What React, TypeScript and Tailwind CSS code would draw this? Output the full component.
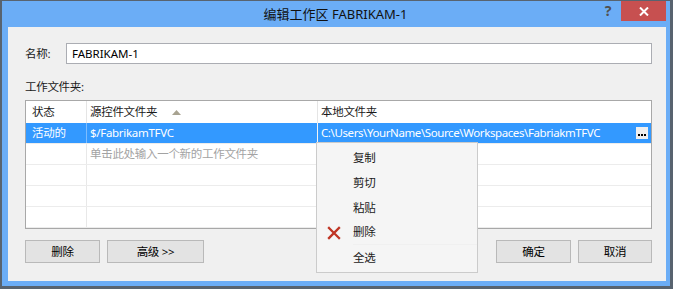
import React from "react";

const rows = [
  {
    status: "活动的",
    src: "$/FabrikamTFVC",
    local: "C:\\Users\\YourName\\Source\\Workspaces\\FabriakmTFVC",
    selected: true,
  },
  { status: "", src: "单击此处输入一个新的工作文件夹", local: "", hint: true },
  { status: "", src: "", local: "" },
  { status: "", src: "", local: "" },
  { status: "", src: "", local: "" },
];

const menuItems = ["复制", "剪切", "粘贴", "删除", "全选"];

function RedX() {
  return (
    <svg width="14" height="14" viewBox="0 0 14 14">
      <path d="M2 2 L12 12 M12 2 L2 12" stroke="#bf3524" strokeWidth="2.3" strokeLinecap="square" />
    </svg>
  );
}

function Button({ label, w }: { label: string; w: string }) {
  return (
    <div
      className={`${w} h-[23px] flex items-center justify-center bg-[#e3e3e3] border border-[#b9b9b9] text-[11.5px] text-black`}
    >
      {label}
    </div>
  );
}

export default function App() {
  return (
    <div className='w-[673px] h-[289px] flex flex-col bg-[#6badf6] border-l-2 border-t border-r-[3px] border-b-[3px] border-[#58636f] font-[family-name:"Noto_Sans","Noto_Sans_CJK_SC",sans-serif] leading-none'>
      {/* title bar */}
      <div className="h-[26px] grid grid-cols-[1fr_auto_1fr] pr-[4px]">
        <div />
        <div className="flex items-center text-[13px] text-[#111] pl-[3px]">编辑工作区 FABRIKAM-1</div>
        <div className="flex justify-end items-start">
          <div className="w-[26px] h-[20px] flex items-center justify-center text-[14px] font-bold text-[#505050]">?</div>
          <div className="w-[45px] h-[20px] bg-[#c75050] flex items-center justify-center">
            <svg width="10" height="9" viewBox="0 0 10 9">
              <path d="M1 0.5 L9 8.5 M9 0.5 L1 8.5" stroke="#fff" strokeWidth="2" />
            </svg>
          </div>
        </div>
      </div>

      {/* content */}
      <div className="flex-1 ml-[6px] mr-[4px] mb-[5px] bg-[#f0f0f0] pl-[17px] pr-[14px] pt-[16px] flex flex-col text-[11.5px] tracking-[-0.3px] text-[#1a1a1a]">
        <div className="flex items-center h-[21px]">
          <div className="w-[41px]">名称:</div>
          <div className="flex-1 h-[21px] bg-white border border-[#abadb3] flex items-center pl-[5px] text-black tracking-normal">
            FABRIKAM-1
          </div>
        </div>

        <div className="mt-[15px] h-[16px] flex items-center">工作文件夹:</div>

        <div className="relative mt-[5px] h-[129px] border border-[#a8a8a8] bg-white flex flex-col">
          <div className="h-[22px] flex shrink-0">
            <div className="w-[60px] pl-[6px] flex items-center">状态</div>
            <div className="w-[231px] pl-[3px] flex items-center border-l border-[#e5e5e5]">
              源控件文件夹
              <svg className="ml-[15px]" width="9" height="5" viewBox="0 0 9 5">
                <path d="M0 5 L4.5 0 L9 5 Z" fill="#a8a391" />
              </svg>
            </div>
            <div className="flex-1 pl-[3px] flex items-center border-l border-[#e5e5e5]">本地文件夹</div>
          </div>
          {rows.map((r, i) => (
            <div key={i} className="h-[21px] flex shrink-0 border-b border-[#ececec]">
              <div className={`w-[60px] pl-[6px] flex items-center ${r.selected ? "bg-[#3399ff] text-white" : ""}`}>
                {r.status}
              </div>
              <div
                className={`w-[231px] pl-[3px] flex items-center border-l ${
                  r.selected ? "bg-[#3399ff] text-white border-[#7dbdff]" : "border-[#e8e8e8]"
                } ${r.hint ? "text-[#a3a3a3]" : ""}`}
              >
                {r.src}
              </div>
              <div
                className={`flex-1 pl-[3px] pr-[3px] flex items-center border-l ${
                  r.selected ? "bg-[#3399ff] text-white border-[#f3f3f3]" : "border-[#e8e8e8]"
                }`}
              >
                <span className="flex-1 tracking-[-0.4px]">{r.local}</span>
                {r.selected && (
                  <div className="w-[12px] h-[12px] bg-[#efefef] flex justify-center items-end pb-[3px] gap-[1px]">
                    <div className="w-[2px] h-[2px] bg-black" />
                    <div className="w-[2px] h-[2px] bg-black" />
                    <div className="w-[2px] h-[2px] bg-black" />
                  </div>
                )}
              </div>
            </div>
          ))}

          {/* context menu */}
          <div className="absolute left-[290px] top-[41px] w-[162px] h-[131px] bg-[#f5f5f5] border border-[#cbcbcb] py-[2px] flex flex-col text-[#1a1a1a]">
            {menuItems.map((m) => (
              <div key={m} className="h-[25px] flex items-center">
                <div className="w-[36px] pl-[10px] flex items-center">{m === "删除" && <RedX />}</div>
                <div
                  className={`flex-1 h-full flex items-center ${m === "删除" ? "border-b border-[#f0f0f0]" : ""}`}
                >
                  {m}
                </div>
              </div>
            ))}
          </div>
        </div>

        <div className="mt-[11px] flex items-center">
          <Button label="删除" w="w-[75px]" />
          <div className="w-[7px]" />
          <Button label="高级 >>" w="w-[97px]" />
          <div className="flex-1" />
          <Button label="确定" w="w-[75px]" />
          <div className="w-[7px]" />
          <Button label="取消" w="w-[74px]" />
        </div>
      </div>
    </div>
  );
}
